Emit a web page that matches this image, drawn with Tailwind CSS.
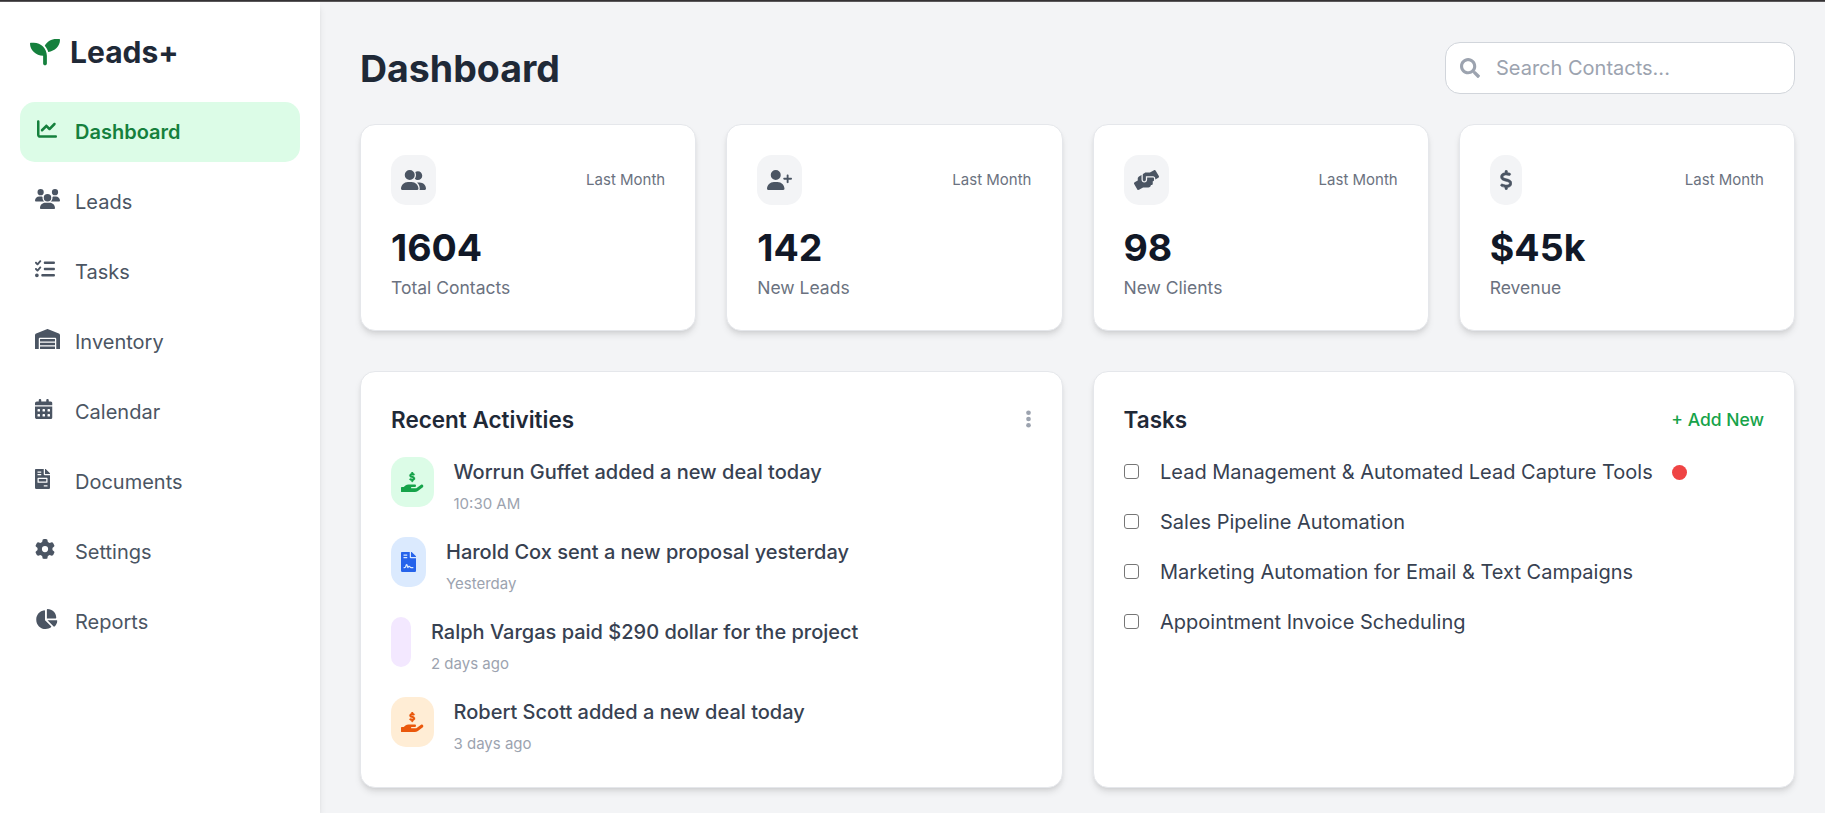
<!DOCTYPE html>
<html lang="en" class="text-[20px]">
<head>
<meta charset="utf-8">
<title>Leads+ Dashboard</title>
<script src="https://cdn.jsdelivr.net/npm/@tailwindcss/browser@4"></script>
</head>
<body class="h-screen overflow-hidden bg-gray-100 font-['Inter',sans-serif] text-base text-[#1f2937]">
<!-- icon sprite -->
<svg class="hidden">
<symbol id="seedling" viewBox="0 0 512 512"><path d="M64 96H16C7 96 0 103 0 112C0 227 100.300 320 224 320v132c0 17 14 32 32 32s32-15 32-32V320C288 196.300 187.700 96 64 96zm384-64c-84.200 0-157.400 46.500-195.700 115.200 27.700 30.200 48.200 66.900 59 107.600C424 243.100 512 160 512 48c0-9-7-16-16-16h-48z"/></symbol>
<symbol id="chart-line" viewBox="0 0 512 512"><path d="M64 64c0-17.700-14.300-32-32-32S0 46.300 0 64V400c0 44.200 35.800 80 80 80H480c17.700 0 32-14.300 32-32s-14.300-32-32-32H80c-8.800 0-16-7.200-16-16V64zm406.600 86.600c12.500-12.500 12.500-32.800 0-45.300s-32.800-12.500-45.300 0L320 210.700l-57.400-57.400c-12.500-12.500-32.800-12.500-45.300 0l-112 112c-12.500 12.500-12.500 32.800 0 45.300s32.800 12.500 45.300 0L240 221.300l57.400 57.400c12.500 12.500 32.800 12.500 45.300 0l128-128z"/></symbol>
<symbol id="users" viewBox="0 0 640 512"><path d="M144 0a80 80 0 1 1 0 160A80 80 0 1 1 144 0zM512 0a80 80 0 1 1 0 160A80 80 0 1 1 512 0zM0 298.700C0 239.800 47.800 192 106.700 192h42.700c15.900 0 31 3.500 44.600 9.700c-1.300 7.200-1.900 14.700-1.900 22.300c0 38.200 16.800 72.500 43.300 96H21.300C9.600 320 0 310.400 0 298.700zM405.300 320h-.7c26.600-23.500 43.300-57.800 43.300-96c0-7.600-.7-15-1.900-22.300c13.600-6.300 28.700-9.700 44.600-9.700h42.700C592.200 192 640 239.800 640 298.700c0 11.800-9.600 21.300-21.300 21.300H405.300zM224 224a96 96 0 1 1 192 0 96 96 0 1 1-192 0zM128 485.300C128 411.700 187.700 352 261.300 352H378.700C452.300 352 512 411.700 512 485.300c0 14.700-11.900 26.700-26.700 26.700H154.700c-14.700 0-26.700-11.900-26.700-26.700z"/></symbol>
<symbol id="list-check" viewBox="0 0 512 512"><path d="M152.100 38.200c9.900 8.900 10.700 24 1.800 33.900l-72 80c-4.400 4.900-10.600 7.800-17.200 7.900s-12.900-2.400-17.600-7L7 113C-2.300 103.600-2.300 88.400 7 79s24.600-9.400 33.900 0l22.100 22.100 55.100-61.200c8.900-9.900 24-10.700 33.900-1.800zm0 160c9.900 8.900 10.700 24 1.800 33.900l-72 80c-4.400 4.900-10.600 7.800-17.200 7.900s-12.900-2.400-17.600-7L7 273c-9.400-9.400-9.400-24.600 0-33.900s24.600-9.400 33.900 0l22.100 22.100 55.100-61.200c8.900-9.900 24-10.700 33.900-1.800zM224 96c0-17.700 14.300-32 32-32H480c17.700 0 32 14.300 32 32s-14.300 32-32 32H256c-17.700 0-32-14.300-32-32zm0 160c0-17.700 14.300-32 32-32H480c17.700 0 32 14.300 32 32s-14.300 32-32 32H256c-17.700 0-32-14.300-32-32zM160 416c0-17.700 14.300-32 32-32H480c17.700 0 32 14.300 32 32s-14.300 32-32 32H192c-17.700 0-32-14.300-32-32zM48 368a48 48 0 1 1 0 96 48 48 0 1 1 0-96z"/></symbol>
<symbol id="warehouse" viewBox="0 0 640 512"><path d="M504 352H136.400c-4.400 0-8 3.600-8 8l-.1 48c0 4.400 3.600 8 8 8H504c4.400 0 8-3.600 8-8v-48c0-4.400-3.600-8-8-8zm0 96H136.100c-4.400 0-8 3.600-8 8l-.1 48c0 4.400 3.600 8 8 8h368c4.400 0 8-3.600 8-8v-48c0-4.400-3.600-8-8-8zm0-192H136.600c-4.400 0-8 3.600-8 8l-.1 48c0 4.400 3.600 8 8 8H504c4.400 0 8-3.600 8-8v-48c0-4.400-3.600-8-8-8zm106.500-139L338.400 3.700a48.150 48.150 0 0 0-36.900 0L29.500 117C11.700 124.500 0 141.900 0 161.300V504c0 4.400 3.600 8 8 8h80c4.400 0 8-3.600 8-8V256c0-17.600 14.600-32 32.600-32h382.800c18 0 32.600 14.400 32.600 32v248c0 4.400 3.600 8 8 8h80c4.400 0 8-3.600 8-8V161.300c0-19.400-11.700-36.800-29.500-44.300z"/></symbol>
<symbol id="calendar" viewBox="0 0 448 512"><path d="M128 0c17.700 0 32 14.300 32 32V64H288V32c0-17.700 14.300-32 32-32s32 14.300 32 32V64h48c26.500 0 48 21.500 48 48v48H0V112C0 85.500 21.500 64 48 64H96V32c0-17.700 14.300-32 32-32zM0 192H448V464c0 26.500-21.500 48-48 48H48c-26.500 0-48-21.500-48-48V192zm64 80v32c0 8.800 7.200 16 16 16h32c8.800 0 16-7.200 16-16V272c0-8.800-7.200-16-16-16H80c-8.800 0-16 7.200-16 16zm128 0v32c0 8.800 7.200 16 16 16h32c8.800 0 16-7.200 16-16V272c0-8.800-7.200-16-16-16H208c-8.800 0-16 7.200-16 16zm144-16c-8.800 0-16 7.200-16 16v32c0 8.800 7.200 16 16 16h32c8.800 0 16-7.200 16-16V272c0-8.800-7.200-16-16-16H336zM64 400v32c0 8.800 7.200 16 16 16h32c8.800 0 16-7.200 16-16V400c0-8.800-7.200-16-16-16H80c-8.800 0-16 7.200-16 16zm144-16c-8.800 0-16 7.200-16 16v32c0 8.800 7.200 16 16 16h32c8.800 0 16-7.200 16-16V400c0-8.800-7.200-16-16-16H208zm112 16v32c0 8.800 7.200 16 16 16h32c8.800 0 16-7.200 16-16V400c0-8.800-7.200-16-16-16H336c-8.800 0-16 7.200-16 16z"/></symbol>
<symbol id="file-invoice" viewBox="0 0 384 512"><path d="M288 256H96v64h192v-64zm89-151L279.100 7c-4.500-4.500-10.600-7-17-7H256v128h128v-6.100c0-6.300-2.500-12.400-7-16.900zm-153 31V0H24C10.700 0 0 10.700 0 24v464c0 13.300 10.700 24 24 24h336c13.300 0 24-10.700 24-24V160H248c-13.200 0-24-10.800-24-24zM64 72c0-4.400 3.600-8 8-8h80c4.400 0 8 3.600 8 8v16c0 4.400-3.600 8-8 8H72c-4.400 0-8-3.600-8-8V72zm0 64c0-4.400 3.600-8 8-8h80c4.400 0 8 3.600 8 8v16c0 4.400-3.600 8-8 8H72c-4.400 0-8-3.600-8-8v-16zm256 304c0 4.400-3.600 8-8 8h-80c-4.400 0-8-3.600-8-8v-16c0-4.400 3.600-8 8-8h80c4.400 0 8 3.600 8 8v16zm0-200v96c0 8.800-7.200 16-16 16H80c-8.800 0-16-7.200-16-16v-96c0-8.800 7.200-16 16-16h224c8.800 0 16 7.200 16 16z"/></symbol>
<symbol id="gear" viewBox="0 0 512 512"><path d="M495.900 166.600c3.200 8.700 .5 18.400-6.400 24.600l-43.300 39.400c1.100 8.300 1.700 16.800 1.700 25.400s-.6 17.100-1.700 25.400l43.300 39.400c6.900 6.200 9.600 15.900 6.400 24.600c-4.400 11.900-9.700 23.300-15.800 34.300l-4.700 8.100c-6.600 11-14 21.400-22.100 31.200c-5.900 7.200-15.700 9.600-24.500 6.800l-55.700-17.700c-13.400 10.300-28.200 18.900-44 25.400l-12.500 57.100c-2 9.100-9 16.300-18.200 17.800c-13.800 2.300-28 3.500-42.500 3.500s-28.700-1.200-42.500-3.500c-9.200-1.500-16.200-8.700-18.200-17.800l-12.500-57.100c-15.800-6.500-30.600-15.100-44-25.400L83.100 425.900c-8.800 2.800-18.600 .3-24.500-6.800c-8.100-9.800-15.500-20.200-22.100-31.200l-4.700-8.100c-6.100-11-11.400-22.400-15.800-34.300c-3.200-8.700-.5-18.400 6.400-24.600l43.300-39.400C64.600 273.100 64 264.600 64 256s.6-17.100 1.700-25.400L22.400 191.200c-6.900-6.200-9.600-15.900-6.400-24.600c4.400-11.900 9.700-23.300 15.800-34.300l4.700-8.100c6.600-11 14-21.400 22.100-31.200c5.900-7.200 15.700-9.600 24.500-6.800l55.700 17.700c13.400-10.300 28.200-18.900 44-25.400l12.500-57.100c2-9.100 9-16.300 18.200-17.800C227.300 1.200 241.500 0 256 0s28.700 1.200 42.500 3.500c9.200 1.500 16.200 8.700 18.200 17.800l12.500 57.100c15.800 6.500 30.600 15.100 44 25.400l55.700-17.700c8.800-2.800 18.600-.3 24.500 6.800c8.100 9.800 15.500 20.200 22.100 31.200l4.700 8.100c6.100 11 11.400 22.400 15.800 34.300zM256 336a80 80 0 1 0 0-160 80 80 0 1 0 0 160z"/></symbol>
<symbol id="chart-pie" viewBox="0 0 576 512"><path d="M304 240V16.600c0-9 7-16.600 16-16.600C443.700 0 544 100.300 544 224c0 9-7.600 16-16.600 16H304zM32 272C32 150.700 122.100 50.300 239 34.300c9.200-1.300 17 6.100 17 15.400V288L412.500 444.500c6.700 6.700 6.200 17.700-1.500 23.100C371.800 495.600 323.800 512 272 512C139.500 512 32 404.600 32 272zm526.400 16c9.300 0 16.600 7.800 15.400 17c-7.700 55.900-34.600 105.600-73.900 142.300c-6 5.600-15.400 5.200-21.200-.7L320 288H558.400z"/></symbol>
<symbol id="user-group" viewBox="0 0 640 512"><path d="M96 128a128 128 0 1 1 256 0A128 128 0 1 1 96 128zM0 482.300C0 383.800 79.800 304 178.300 304h91.400C368.200 304 448 383.800 448 482.300c0 16.400-13.300 29.700-29.700 29.700H29.700C13.300 512 0 498.700 0 482.300zM609.300 512H471.400c5.400-9.400 8.600-20.300 8.600-32v-8c0-60.700-27.100-115.200-69.800-151.800c2.400-.1 4.700-.2 7.100-.2h61.400C567.800 320 640 392.200 640 481.300c0 17-13.800 30.700-30.700 30.700zM432 256c-31 0-59-12.600-79.300-32.900C372.400 196.500 384 163.600 384 128c0-26.800-6.600-52.100-18.300-74.300C384.300 40.100 407.200 32 432 32c61.900 0 112 50.100 112 112s-50.100 112-112 112z"/></symbol>
<symbol id="user-plus" viewBox="0 0 640 512"><path d="M96 128a128 128 0 1 1 256 0A128 128 0 1 1 96 128zM0 482.300C0 383.800 79.800 304 178.300 304h91.400C368.200 304 448 383.800 448 482.300c0 16.400-13.300 29.700-29.700 29.700H29.700C13.300 512 0 498.700 0 482.300zM504 312V248H440c-13.300 0-24-10.700-24-24s10.700-24 24-24h64V136c0-13.300 10.700-24 24-24s24 10.700 24 24v64h64c13.300 0 24 10.700 24 24s-10.700 24-24 24H552v64c0 13.300-10.700 24-24 24s-24-10.700-24-24z"/></symbol>
<symbol id="handshake-angle" viewBox="0 0 640 512"><path d="M488 192H336v56c0 39.700-32.300 72-72 72s-72-32.300-72-72V126.400l-64.900 39C107.800 176.900 96 197.800 96 220.200v47.300l-80 46.200C.7 322.500-4.600 342.100 4.300 357.400l80 138.600c8.800 15.300 28.400 20.500 43.700 11.700L231.400 448H368c35.300 0 64-28.700 64-64h16c17.700 0 32-14.300 32-32v-64h8c13.300 0 24-10.700 24-24v-48c0-13.300-10.700-24-24-24zm147.700-37.400L555.700 16C546.900.7 527.300-4.500 512 4.300L408.600 64H306.400c-12 0-23.700 3.400-33.900 9.700L239 94.600c-9.400 5.800-15 16.100-15 27.100V248c0 22.100 17.900 40 40 40s40-17.900 40-40v-88h184c30.900 0 56 25.100 56 56v28.500l80-46.200c15.300-8.900 20.500-28.400 11.700-43.700z"/></symbol>
<symbol id="dollar" viewBox="0 0 320 512"><path stroke="currentColor" stroke-width="14" d="M160 6c17.700 0 32 14.300 32 32V67.700c1.600 .2 3.100 .4 4.700 .7c.4 .1 .7 .1 1.100 .2l48 8.800c17.400 3.200 28.900 19.900 25.700 37.200s-19.900 28.900-37.200 25.700l-47.500-8.700c-31.300-4.600-58.900-1.500-78.300 6.200s-27.200 18.300-29 28.100c-2 10.700-.5 16.700 1.200 20.400c1.800 3.900 5.500 8.300 12.800 13.200c16.300 10.700 41.300 17.700 73.700 26.300l2.900 .8c28.600 7.600 63.600 16.800 89.600 33.800c14.200 9.300 27.600 21.900 35.900 39.500c8.500 17.900 10.300 37.900 6.400 59.200c-6.900 38-33.100 63.400-65.600 76.700c-13.700 5.600-28.600 9.200-44.400 11V474c0 17.700-14.300 32-32 32s-32-14.300-32-32V445.100c-.4-.1-.9-.1-1.300-.2l-.2 0 0 0c-24.400-3.800-64.500-14.300-91.500-26.300c-16.100-7.200-23.400-26.100-16.200-42.200s26.100-23.400 42.200-16.200c20.900 9.300 55.300 18.500 75.200 21.600c31.900 4.700 58.200 2 76-5.300c16.900-6.900 24.600-16.900 26.800-28.900c1.900-10.600 .4-16.700-1.300-20.400c-1.900-4-5.600-8.400-13-13.300c-16.400-10.700-41.500-17.700-74-26.300l-2.800-.7 0 0C119.400 279.300 84.400 270 58.400 253c-14.200-9.300-27.500-22-35.800-39.600c-8.400-17.900-10.100-37.900-6.100-59.200C23.700 116 52.300 91.200 84.800 78.300c13.300-5.300 27.900-8.900 43.200-11V38c0-17.700 14.300-32 32-32z"/></symbol>
<symbol id="search" viewBox="0 0 512 512"><path d="M505 442.700L405.300 343c-4.500-4.500-10.600-7-17-7H372c27.600-35.300 44-79.700 44-128C416 93.100 322.900 0 208 0S0 93.100 0 208s93.100 208 208 208c48.300 0 92.700-16.400 128-44v16.300c0 6.400 2.500 12.500 7 17l99.700 99.700c9.400 9.400 24.600 9.400 33.900 0l28.300-28.300c9.400-9.400 9.400-24.600 .1-34zM208 336c-70.700 0-128-57.200-128-128 0-70.700 57.200-128 128-128 70.700 0 128 57.200 128 128 0 70.700-57.200 128-128 128z"/></symbol>
<symbol id="ellipsis" viewBox="0 0 128 512"><circle cx="64" cy="96" r="60"/><circle cx="64" cy="256" r="60"/><circle cx="64" cy="416" r="60"/></symbol>
<symbol id="hand-dollar" viewBox="0 0 576 512"><path stroke="currentColor" stroke-width="8" d="M312 24V34.500c6.400 1.200 12.600 2.700 18.200 4.200c12.800 3.400 20.400 16.600 17 29.400s-16.600 20.400-29.400 17c-10.900-2.900-21.100-4.900-30.200-5c-7.300-.1-14.700 1.700-19.400 4.400c-2.100 1.300-3.100 2.400-3.500 3c-.3 .5-.7 1.200-.7 2.800c0 .3 0 .5 0 .6c.2 .2 .9 1.200 3.300 2.600c5.800 3.500 14.400 6.200 27.400 10.100l.9 .3c11.100 3.300 25.900 7.800 37.900 15.300c13.700 8.600 26.100 22.900 26.400 44.900c.3 22.500-11.400 38.900-26.700 48.500c-6.700 4.100-13.900 7-21.300 8.800V232c0 13.300-10.700 24-24 24s-24-10.700-24-24V220.600c-9.500-2.300-18.200-5.300-25.600-7.800c-2.100-.7-4.100-1.400-6-2c-12.600-4.200-19.400-17.800-15.200-30.400s17.800-19.400 30.400-15.200c2.600 .9 5 1.700 7.300 2.500c13.600 4.600 23.400 7.900 33.900 8.300c8 .3 15.100-1.600 19.200-4.100c1.900-1.200 2.800-2.200 3.200-2.900c.4-.6 .9-1.800 .8-4.100l0-.2c0-1 0-2.100-4-4.600c-5.700-3.600-14.300-6.400-27.100-10.300l-1.900-.6c-10.800-3.200-25-7.500-36.400-14.400c-13.500-8.100-26.500-22-26.600-44.100c-.1-22.900 12.900-38.600 27.700-47.400c6.400-3.800 13.300-6.400 20.200-8.200V24c0-13.300 10.700-24 24-24s24 10.700 24 24z"/><path d="M568.200 336.300c13.100 17.800 9.300 42.800-8.500 55.900L433.100 485.500c-23.400 17.200-51.600 26.500-80.700 26.500H192 16c-9 0-16-7-16-16V400c0-9 7-16 16-16H68.800l44.900-36c22.700-18.200 50.900-28 80-28H272h16 64c17.700 0 32 14.300 32 32s-14.300 32-32 32H288 272c-8.800 0-16 7.200-16 16s7.200 16 16 16H392.600l119.700-88.200c17.800-13.100 42.800-9.300 55.900 8.500z"/></symbol>
<symbol id="file-contract" viewBox="0 0 384 512"><path d="M377 105L279.100 7c-4.500-4.500-10.600-7-17-7H256v128h128v-6.100c0-6.300-2.500-12.400-7-16.900zM224 136V0H24C10.700 0 0 10.700 0 24v464c0 13.300 10.700 24 24 24h336c13.300 0 24-10.700 24-24V160H248c-13.200 0-24-10.800-24-24zM64 72c0-4.400 3.600-8 8-8h80c4.400 0 8 3.600 8 8v16c0 4.400-3.600 8-8 8H72c-4.400 0-8-3.600-8-8V72zm0 64c0-4.400 3.600-8 8-8h80c4.400 0 8 3.600 8 8v16c0 4.400-3.600 8-8 8H72c-4.400 0-8-3.600-8-8v-16zM256.800 384H304c8.800 0 16 7.200 16 16s-7.200 16-16 16h-47.200c-16.400 0-31.300-9.100-38.600-23.900-3-5.900-8.100-6.500-10.200-6.500s-7.200 .6-10 6.200l-7.700 15.300a16 16 0 0 1-14.300 8.800c-.4 0-.8 0-1.100-.1-6.500-.5-12-4.800-14-10.900L144 354.600l-10.600 31.900c-5.900 17.700-22.400 29.500-41 29.500H80c-8.800 0-16-7.200-16-16s7.200-16 16-16h12.400c4.800 0 9.100-3.100 10.600-7.700l18.200-54.600c3.300-9.800 12.400-16.400 22.800-16.400s19.500 6.600 22.800 16.400l13.900 41.600c19.800-16.200 54.100-9.700 66 14.200 2 4.100 6 6.500 10.100 6.500z"/></symbol>
</svg>

<div class="flex h-full flex-col">
<div class="h-[2px] shrink-0 border-b border-[#5a585a] bg-[#343234]"></div>
<div class="flex min-h-0 flex-1">
<aside class="relative w-64 shrink-0 bg-white p-4 shadow-[0_5px_7.5px_-1.25px_rgb(0_0_0/0.1),0_2.5px_5px_-2.5px_rgb(0_0_0/0.1)]">
  <div class="flex h-[60px] items-center gap-2 px-2">
    <svg class="size-[30px] fill-[#15803d]"><use href="#seedling"/></svg>
    <span class="text-[30px] leading-10 font-bold">Leads+</span>
  </div>
  <nav class="mt-4 flex flex-col gap-2 text-[#4b5563]">
    <a class="flex items-center rounded-xl bg-[#dcfce7] px-3 py-3 font-semibold text-[#15803d]"><span class="mr-2 w-6 pb-[6px]"><svg class="ml-[2px] h-[20px] w-[20px] fill-current"><use href="#chart-line"/></svg></span>Dashboard</a>
    <a class="flex items-center px-3 py-3"><span class="mr-2 w-6 pb-[6px]"><svg class="h-[20px] w-[25px] fill-current"><use href="#users"/></svg></span>Leads</a>
    <a class="flex items-center px-3 py-3"><span class="mr-2 w-6 pb-[6px]"><svg class="h-[20px] w-[20px] fill-current"><use href="#list-check"/></svg></span>Tasks</a>
    <a class="flex items-center px-3 py-3"><span class="mr-2 w-6 pb-[6px]"><svg class="h-[20px] w-[25px] fill-current"><use href="#warehouse"/></svg></span>Inventory</a>
    <a class="flex items-center px-3 py-3"><span class="mr-2 w-6 pb-[6px]"><svg class="h-[20px] w-[17.5px] fill-current"><use href="#calendar"/></svg></span>Calendar</a>
    <a class="flex items-center px-3 py-3"><span class="mr-2 w-6 pb-[6px]"><svg class="h-[20px] w-[15px] fill-current"><use href="#file-invoice"/></svg></span>Documents</a>
    <a class="flex items-center px-3 py-3"><span class="mr-2 w-6 pb-[6px]"><svg class="h-[20px] w-[20px] fill-current"><use href="#gear"/></svg></span>Settings</a>
    <a class="flex items-center px-3 py-3"><span class="mr-2 w-6 pb-[6px]"><svg class="h-[20px] w-[22.5px] fill-current"><use href="#chart-pie"/></svg></span>Reports</a>
  </nav>
</aside>

<main class="flex-1 pt-8 pr-6 pl-8">
  <header class="flex items-center justify-between">
    <h1 class="text-[37.5px] leading-[45px] font-bold">Dashboard</h1>
    <label class="flex h-[52px] w-[350px] items-center gap-[16px] rounded-xl border border-[#d1d5db] bg-white px-[14px]">
      <svg class="mb-[1px] size-[20px] shrink-0 fill-[#9ca3af]"><use href="#search"/></svg>
      <input class="w-full outline-none placeholder:text-[#9ca3af]" placeholder="Search Contacts...">
    </label>
  </header>

  <section class="mt-6 grid grid-cols-4 gap-6">
    <div class="rounded-xl border border-[#e5e7eb] bg-white p-6 shadow-[0_5px_7.5px_-1.25px_rgb(0_0_0/0.1),0_2.5px_5px_-2.5px_rgb(0_0_0/0.1)]">
      <div class="flex items-center justify-between"><span class="flex h-[50px] rounded-xl bg-[#f3f4f6] px-2 pt-[14.5px]"><svg class="h-[20px] w-[25px] fill-[#4b5563]"><use href="#user-group"/></svg></span><span class="text-xs text-[#6b7280]">Last Month</span></div>
      <h2 class="mt-4 text-[37.5px] leading-[45px] font-bold text-[#111827]">1604</h2>
      <p class="mt-1 text-sm text-[#6b7280]">Total Contacts</p>
    </div>
    <div class="rounded-xl border border-[#e5e7eb] bg-white p-6 shadow-[0_5px_7.5px_-1.25px_rgb(0_0_0/0.1),0_2.5px_5px_-2.5px_rgb(0_0_0/0.1)]">
      <div class="flex items-center justify-between"><span class="flex h-[50px] rounded-xl bg-[#f3f4f6] px-2 pt-[14.5px]"><svg class="h-[20px] w-[25px] fill-[#4b5563]"><use href="#user-plus"/></svg></span><span class="text-xs text-[#6b7280]">Last Month</span></div>
      <h2 class="mt-4 text-[37.5px] leading-[45px] font-bold text-[#111827]">142</h2>
      <p class="mt-1 text-sm text-[#6b7280]">New Leads</p>
    </div>
    <div class="rounded-xl border border-[#e5e7eb] bg-white p-6 shadow-[0_5px_7.5px_-1.25px_rgb(0_0_0/0.1),0_2.5px_5px_-2.5px_rgb(0_0_0/0.1)]">
      <div class="flex items-center justify-between"><span class="flex h-[50px] rounded-xl bg-[#f3f4f6] px-2 pt-[14.5px]"><svg class="h-[20px] w-[25px] fill-[#4b5563]"><use href="#handshake-angle"/></svg></span><span class="text-xs text-[#6b7280]">Last Month</span></div>
      <h2 class="mt-4 text-[37.5px] leading-[45px] font-bold text-[#111827]">98</h2>
      <p class="mt-1 text-sm text-[#6b7280]">New Clients</p>
    </div>
    <div class="rounded-xl border border-[#e5e7eb] bg-white p-6 shadow-[0_5px_7.5px_-1.25px_rgb(0_0_0/0.1),0_2.5px_5px_-2.5px_rgb(0_0_0/0.1)]">
      <div class="flex items-center justify-between"><span class="flex h-[50px] rounded-xl bg-[#f3f4f6] px-2 pt-[14.5px]"><svg class="h-[20px] w-[12.5px] fill-current text-[#4b5563]"><use href="#dollar"/></svg></span><span class="text-xs text-[#6b7280]">Last Month</span></div>
      <h2 class="mt-4 text-[37.5px] leading-[45px] font-bold text-[#111827]">$45k</h2>
      <p class="mt-1 text-sm text-[#6b7280]">Revenue</p>
    </div>
  </section>

  <section class="mt-8 grid grid-cols-2 gap-6">
    <div class="rounded-xl border border-[#e5e7eb] bg-white p-6 shadow-[0_5px_7.5px_-1.25px_rgb(0_0_0/0.1),0_2.5px_5px_-2.5px_rgb(0_0_0/0.1)]">
      <div class="mb-4 flex items-center justify-between">
        <h3 class="text-[22.5px] leading-[35px] font-semibold">Recent Activities</h3>
        <svg class="mr-[0.5px] mb-[1px] h-[20px] w-[5px] fill-[#9ca3af]"><use href="#ellipsis"/></svg>
      </div>
      <ul class="flex flex-col gap-4">
        <li class="flex items-start gap-4"><span class="flex h-[50px] rounded-xl bg-[#dcfce7] px-2 pt-[14.5px]"><svg class="h-[20px] w-[22.5px] fill-current text-[#16a34a]"><use href="#hand-dollar"/></svg></span><div><p class="font-medium text-[#374151]">Worrun Guffet added a new deal today</p><div><span class="text-xs text-[#9ca3af]">10:30 AM</span></div></div></li>
        <li class="flex items-start gap-4"><span class="flex h-[50px] rounded-xl bg-[#dbeafe] px-2 pt-[14.5px]"><svg class="h-[20px] w-[15px] fill-[#2563eb]"><use href="#file-contract"/></svg></span><div><p class="font-medium text-[#374151]">Harold Cox sent a new proposal yesterday</p><div><span class="text-xs text-[#9ca3af]">Yesterday</span></div></div></li>
        <li class="flex items-start gap-4"><span class="h-[50px] rounded-xl bg-[#f3e8ff] px-2"></span><div><p class="font-medium text-[#374151]">Ralph Vargas paid $290 dollar for the project</p><div><span class="text-xs text-[#9ca3af]">2 days ago</span></div></div></li>
        <li class="flex items-start gap-4"><span class="flex h-[50px] rounded-xl bg-[#ffedd5] px-2 pt-[14.5px]"><svg class="h-[20px] w-[22.5px] fill-current text-[#ea580c]"><use href="#hand-dollar"/></svg></span><div><p class="font-medium text-[#374151]">Robert Scott added a new deal today</p><div><span class="text-xs text-[#9ca3af]">3 days ago</span></div></div></li>
      </ul>
    </div>
    <div class="rounded-xl border border-[#e5e7eb] bg-white p-6 shadow-[0_5px_7.5px_-1.25px_rgb(0_0_0/0.1),0_2.5px_5px_-2.5px_rgb(0_0_0/0.1)]">
      <div class="mb-4 flex items-center justify-between">
        <h3 class="text-[22.5px] leading-[35px] font-semibold">Tasks</h3>
        <a class="text-sm font-medium text-[#16a34a]">+ Add New</a>
      </div>
      <ul class="flex flex-col gap-4 text-[#374151]">
        <li class="flex items-center"><input type="checkbox" class="mr-[21.5px] mb-[1px] size-[15px] appearance-none rounded-[3px] border border-[#767676]">Lead Management &amp; Automated Lead Capture Tools<span class="ml-[19px] size-[15px] rounded-full bg-[#ef4444]"></span></li>
        <li class="flex items-center"><input type="checkbox" class="mr-[21.5px] mb-[1px] size-[15px] appearance-none rounded-[3px] border border-[#767676]">Sales Pipeline Automation</li>
        <li class="flex items-center"><input type="checkbox" class="mr-[21.5px] mb-[1px] size-[15px] appearance-none rounded-[3px] border border-[#767676]">Marketing Automation for Email &amp; Text Campaigns</li>
        <li class="flex items-center"><input type="checkbox" class="mr-[21.5px] mb-[1px] size-[15px] appearance-none rounded-[3px] border border-[#767676]">Appointment Invoice Scheduling</li>
      </ul>
    </div>
  </section>
</main>
</div>
</div>
</body>
</html>
